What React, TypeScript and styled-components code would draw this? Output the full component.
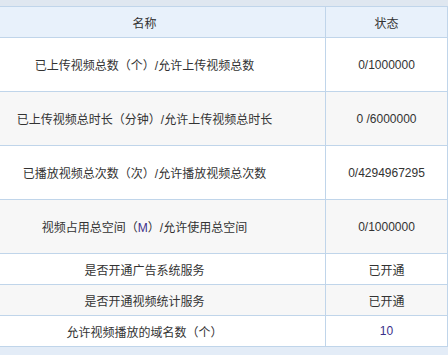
import React from "react";
import styled, { createGlobalStyle } from "styled-components";

const Global = createGlobalStyle`
  html, body { margin: 0; padding: 0; background: #ffffff; }
  body { overflow: hidden; }
`;

const Page = styled.div`
  width: 448px;
  height: 355px;
  overflow: hidden;
  background: #e3ecf7;
  font-family: "Liberation Sans", "Noto Sans CJK SC", sans-serif;
  font-size: 12px;
  color: #333333;
`;

const TopStrip = styled.div`
  height: 6px;
  background: #dfe7f0;
`;

const Table = styled.table`
  margin-left: -37px;
  width: 484px;
  border-collapse: collapse;
  table-layout: fixed;
  border-bottom: 1px solid #c0d5ea;
`;

const HeadCell = styled.th`
  height: 30px;
  padding: 0;
  background: #e8f1fb;
  border: 1px solid #c0d5ea;
  font-weight: normal;
  text-align: center;
  vertical-align: middle;
`;

const Row = styled.tr<{ $alt?: boolean }>`
  background: ${(p) => (p.$alt ? "#f7f7f7" : "#ffffff")};
`;

const Cell = styled.td<{ $tall?: boolean }>`
  height: ${(p) => (p.$tall ? "53px" : "30px")};
  padding: 0;
  border: 1px solid #c0d5ea;
  text-align: center;
  vertical-align: middle;
  white-space: nowrap;
`;

const Accent = styled.span`
  color: #3b2f8a;
`;

type R = { name: React.ReactNode; value: React.ReactNode; tall?: boolean };

const rows: R[] = [
  { name: "已上传视频总数（个）/允许上传视频总数", value: "0/1000000", tall: true },
  { name: "已上传视频总时长（分钟）/允许上传视频总时长", value: "0 /6000000", tall: true },
  { name: "已播放视频总次数（次）/允许播放视频总次数", value: "0/4294967295", tall: true },
  {
    name: (
      <>
        视频占用总空间（<Accent>M</Accent>）/允许使用总空间
      </>
    ),
    value: "0/1000000",
    tall: true,
  },
  { name: "是否开通广告系统服务", value: "已开通" },
  { name: "是否开通视频统计服务", value: "已开通" },
  { name: "允许视频播放的域名数（个）", value: <Accent>10</Accent> },
];

export default function App() {
  return (
    <Page>
      <Global />
      <TopStrip />
      <Table>
        <colgroup>
          <col style={{ width: "362px" }} />
          <col style={{ width: "122px" }} />
        </colgroup>
        <thead>
          <tr>
            <HeadCell>名称</HeadCell>
            <HeadCell>状态</HeadCell>
          </tr>
        </thead>
        <tbody>
          {rows.map((r, i) => (
            <Row key={i} $alt={i % 2 === 1}>
              <Cell $tall={r.tall}>{r.name}</Cell>
              <Cell $tall={r.tall}>{r.value}</Cell>
            </Row>
          ))}
        </tbody>
      </Table>
    </Page>
  );
}
